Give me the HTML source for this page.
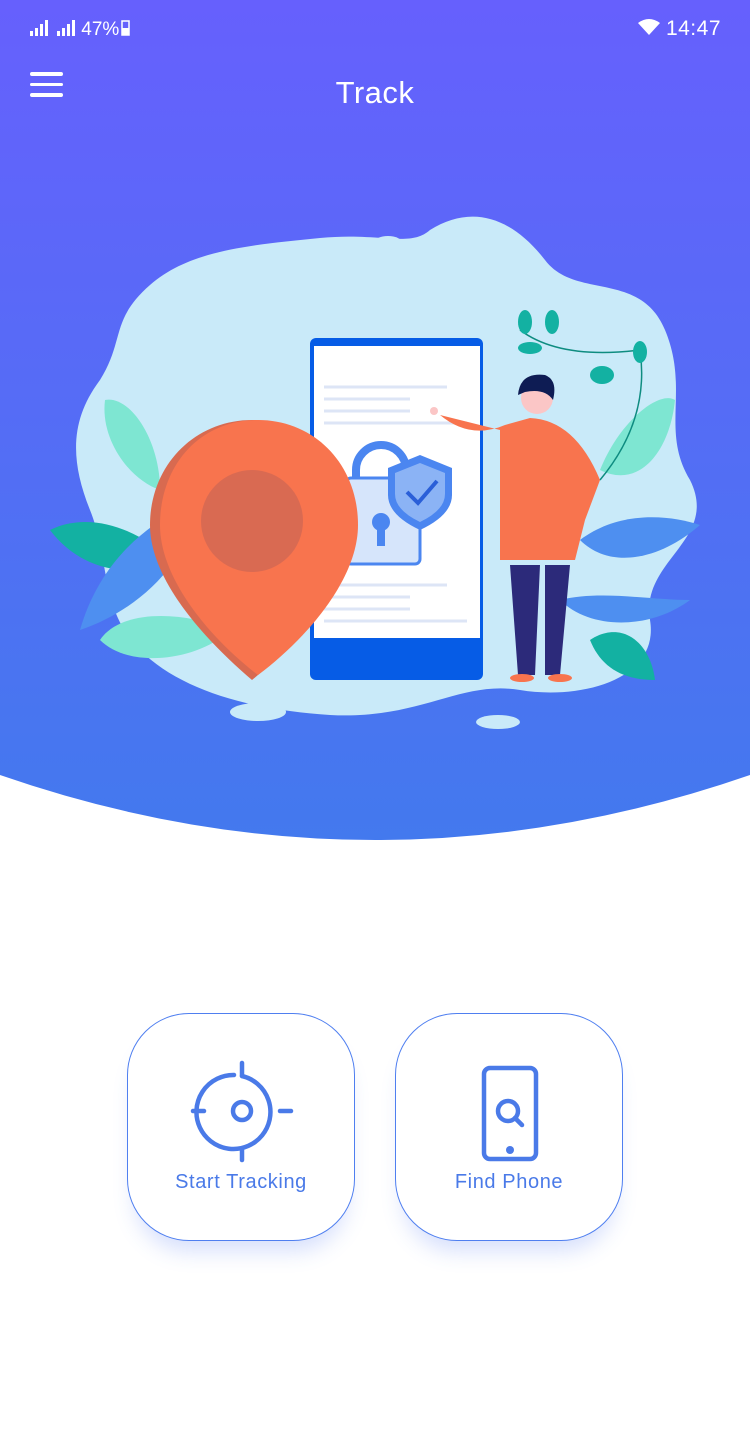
<!DOCTYPE html>
<html><head><meta charset="utf-8"><style>
body{margin:0;width:750px;height:1450px;background:#fff;position:relative;overflow:hidden;font-family:"Liberation Sans",sans-serif}
.card{position:absolute;top:1013px;width:226px;height:226px;border:1.3px solid #4f7ff0;border-radius:62px;background:#fff;box-shadow:0 18px 22px -8px rgba(70,110,240,0.22)}
.lbl{position:absolute;top:157px;width:100%;text-align:center;color:#4a7ae8;font-size:20px;letter-spacing:0.6px}
</style></head><body>
<svg width="750" height="860" style="position:absolute;left:0;top:0">
<defs><linearGradient id="g" x1="0" y1="0" x2="0" y2="1"><stop offset="0" stop-color="#6660fd"/><stop offset="1" stop-color="#4379ee"/></linearGradient></defs>
<path d="M0 0H750V775Q375 905 0 775Z" fill="url(#g)"/>
<path d="M150 285C190 250 250 245 320 238C380 232 410 248 430 230C470 205 510 215 545 260C575 300 640 270 665 330C690 390 660 430 690 480C720 540 640 560 650 620C660 680 580 700 520 690C460 680 420 720 330 715C250 710 180 690 140 650C100 610 110 560 90 510C70 460 70 420 100 380C125 340 110 320 150 285Z" fill="#c9eaf9"/>
<ellipse cx="388" cy="243" rx="14" ry="7" fill="#c9eaf9"/>
<ellipse cx="205" cy="266" rx="12" ry="5" fill="#c9eaf9"/>
<ellipse cx="258" cy="712" rx="28" ry="9" fill="#c9eaf9"/>
<ellipse cx="498" cy="722" rx="22" ry="7" fill="#c9eaf9"/>
<path d="M50 530C90 510 140 530 170 560C130 580 80 570 50 530Z" fill="#13b1a2"/>
<path d="M100 640C120 610 180 610 230 630C200 660 130 670 100 640Z" fill="#7ee6d2"/>
<path d="M80 630C100 560 150 520 200 500C190 560 140 610 80 630Z" fill="#4e8ff0"/>
<path d="M105 400C130 395 160 440 160 490C130 480 100 440 105 400Z" fill="#7ee6d2"/>
<path d="M580 540C620 510 670 515 700 525C660 560 610 570 580 540Z" fill="#4e8ff0"/>
<path d="M560 600C600 590 650 600 690 600C650 630 590 630 560 600Z" fill="#4e8ff0"/>
<path d="M590 640C620 620 650 640 655 680C620 680 600 665 590 640Z" fill="#13b1a2"/>
<path d="M600 470C620 420 660 390 675 400C670 450 640 490 600 470Z" fill="#7ee6d2"/>
<path d="M520 330Q560 360 640 350Q650 420 600 480" stroke="#0e8c80" stroke-width="1.5" fill="none"/>
<ellipse cx="525" cy="322" rx="7" ry="12" fill="#13b1a2"/><ellipse cx="552" cy="322" rx="7" ry="12" fill="#13b1a2"/><ellipse cx="530" cy="348" rx="12" ry="6" fill="#13b1a2"/><ellipse cx="640" cy="352" rx="7" ry="11" fill="#13b1a2"/><ellipse cx="602" cy="375" rx="12" ry="9" fill="#13b1a2"/>
<rect x="310" y="338" width="173" height="342" rx="6" fill="#065ce6"/>
<rect x="314" y="346" width="166" height="292" fill="#fff"/>
<g stroke="#dde5f6" stroke-width="3"><line x1="324" y1="387" x2="447" y2="387"/><line x1="324" y1="399" x2="410" y2="399"/><line x1="324" y1="411" x2="410" y2="411"/><line x1="324" y1="423" x2="467" y2="423"/><line x1="324" y1="585" x2="447" y2="585"/><line x1="324" y1="597" x2="410" y2="597"/><line x1="324" y1="609" x2="410" y2="609"/><line x1="324" y1="621" x2="467" y2="621"/></g>
<path d="M356 480V470A25 25 0 0 1 406 470V480" stroke="#4b86f0" stroke-width="8" fill="none"/>
<rect x="346" y="478" width="74" height="86" rx="5" fill="#d6e5fb" stroke="#4b86f0" stroke-width="3"/>
<circle cx="381" cy="522" r="9" fill="#4b86f0"/><rect x="377" y="522" width="8" height="24" fill="#4b86f0"/>
<path d="M420 455L452 468V495Q452 515 420 530Q388 515 388 495V468Z" fill="#4b86f0"/>
<path d="M420 463L445 473V494Q445 510 420 522Q395 510 395 494V473Z" fill="#8bb3f5"/>
<path d="M407 492L418 503L437 481" stroke="#2a5fd8" stroke-width="4" fill="none"/>
<path d="M252 420C310 420 355 465 355 525C355 580 300 640 252 680C205 640 150 580 150 525C150 465 195 420 252 420Z" fill="#d86a50"/>
<path d="M258 420C315 420 358 465 358 525C358 580 305 640 258 675C212 640 160 580 160 525C160 465 200 420 258 420Z" fill="#f8744e"/>
<circle cx="252" cy="521" r="51" fill="#d96a52"/>
<path d="M440 415Q470 440 505 425L530 418Q575 420 600 480L585 520L575 560H500L500 430Z" fill="#f8744e"/>
<path d="M510 565H540L535 675H518Z M545 565H570L560 675H545Z" fill="#2c2a7a"/>
<circle cx="537" cy="398" r="16" fill="#fbc6c6"/>
<path d="M518 395Q520 372 545 375Q558 380 553 400Q545 388 525 392Z" fill="#0e1c54"/>
<ellipse cx="522" cy="678" rx="12" ry="4" fill="#f8744e"/><ellipse cx="560" cy="678" rx="12" ry="4" fill="#f8744e"/>
<circle cx="434" cy="411" r="4" fill="#fbc6c6"/>
</svg>
<div style="position:absolute;left:30px;top:19px;color:#fff;font-size:19px">
<svg width="46" height="16" style="vertical-align:-1px"><g fill="#fff"><rect x="0" y="11" width="3" height="5"/><rect x="5" y="8" width="3" height="8"/><rect x="10" y="4" width="3" height="12"/><rect x="15" y="0" width="3" height="16"/><rect x="27" y="11" width="3" height="5"/><rect x="32" y="8" width="3" height="8"/><rect x="37" y="4" width="3" height="12"/><rect x="42" y="0" width="3" height="16"/></g></svg> 47%<svg width="10" height="16" style="vertical-align:-1px;margin-left:2px"><rect x="1" y="1" width="7" height="14" fill="none" stroke="#fff" stroke-width="1.5"/><rect x="1" y="8" width="7" height="7" fill="#fff"/></svg></div>
<div style="position:absolute;right:29px;top:17px;color:#fff;font-size:21px;letter-spacing:0.5px">
<svg width="22" height="16" style="vertical-align:0px"><path d="M11 16L0 4Q11-4 22 4Z" fill="#fff"/></svg> 14:47</div>
<div style="position:absolute;left:30px;top:72px"><div style="width:33px;height:3.5px;background:#fff;border-radius:2px"></div><div style="width:33px;height:3.5px;background:#fff;border-radius:2px;margin-top:7px"></div><div style="width:33px;height:3.5px;background:#fff;border-radius:2px;margin-top:7px"></div></div>
<div style="position:absolute;left:0;width:750px;top:75px;text-align:center;color:#fff;font-size:31px;letter-spacing:0.5px">Track</div>
<div class="card" style="left:127px">
<svg width="226" height="226" style="position:absolute;left:0;top:0"><g stroke="#4a7ae8" stroke-width="4.5" fill="none" stroke-linecap="round"><path d="M114 62A37 37 0 1 1 106 61"/><path d="M114 49V62"/><path d="M114 136V146"/><path d="M65 97H76"/><path d="M152 97H163"/><circle cx="114" cy="97" r="9"/></g></svg>
<div class="lbl">Start Tracking</div></div>
<div class="card" style="left:395px">
<svg width="226" height="226" style="position:absolute;left:0;top:0"><g stroke="#4a7ae8" stroke-width="4.5" fill="none" stroke-linecap="round"><rect x="88" y="54" width="52" height="91" rx="6"/><circle cx="112" cy="97" r="10"/><path d="M119 104L126 111"/></g><circle cx="114" cy="136" r="4" fill="#4a7ae8"/></svg>
<div class="lbl">Find Phone</div></div>
</body></html>
